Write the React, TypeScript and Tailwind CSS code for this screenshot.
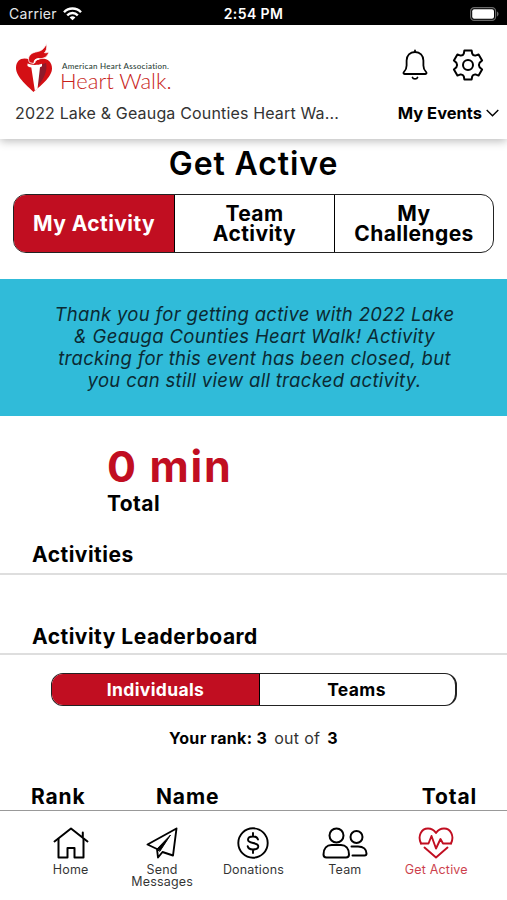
import type { ReactNode } from 'react';
import clsx from 'clsx';

const tabs = [
  { id: 'my', lines: ['My Activity'], className: 'w-[160px]' },
  { id: 'team', lines: ['Team', 'Activity'], className: 'w-[160px] border-l border-black' },
  { id: 'challenges', lines: ['My', 'Challenges'], className: 'flex-1 border-l border-black' },
];

const bannerLines = [
  'Thank you for getting active with 2022 Lake',
  '& Geauga Counties Heart Walk! Activity',
  'tracking for this event has been closed, but',
  'you can still view all tracked activity.',
];

function StatusBar() {
  return (
    <div className="flex h-[25px] items-center bg-black px-[9px] pt-[2px] text-white">
      <div className="flex flex-1 items-center gap-[6px]">
        <span className="text-[14px] leading-5 tracking-[0.02em] text-gray-200">Carrier</span>
        <svg width="19" height="14" viewBox="0 0 19 14" fill="none" stroke="white" strokeWidth="2.4">
          <path d="M1 5.2C5.6.3 13.4.3 18 5.2" />
          <path d="M4.2 8.3c3-3 7.6-3 10.6 0" />
          <path d="M9.5 13.3 6.6 10.4c1.7-1.5 4.1-1.5 5.8 0z" fill="white" stroke="none" />
        </svg>
      </div>
      <span className="text-[14px] font-semibold leading-5 tracking-[0.03em]">2:54 PM</span>
      <div className="flex flex-1 justify-end">
        <svg width="29" height="14" viewBox="0 0 29 14" className="-mr-[1px]">
          <rect x="0.6" y="0.6" width="25" height="12.8" rx="3.6" fill="none" stroke="#6b6b6b" strokeWidth="1.2" />
          <rect x="2.2" y="2.2" width="21.8" height="9.6" rx="2" fill="white" />
          <path d="M27 4.6v4.8c2-.8 2-4 0-4.8z" fill="#6b6b6b" />
        </svg>
      </div>
    </div>
  );
}

function HeartTorchLogo() {
  return (
    <svg width="38" height="50" viewBox="0 0 38 50">
      <path
        d="M18.5 49C14 44 1 34.5 1 25 1 18.5 5 15.5 9.5 15.5c4 0 7 2 9 5 2-3 5-5 9-5 5 0 9.5 3.5 9.5 10 0 9-13 18.5-18.5 23.5z"
        fill="#d40f14"
      />
      <path d="M24 22.5 31 20c2 7-2 17-11.5 27z" fill="#8f1a2a" />
      <path
        d="M14.5 19.5C12 15 14.500 11 19 9.500c4-1.400 9-.5 12.500-9 .8 5-.2 7.500-2 9.200 1.500.2 3 0 4.300-1-.8 5-4.800 7-9.300 7-2.500 0-5.500.8-5.500 5z"
        fill="#d40f14"
        stroke="white"
        strokeWidth="0.8"
      />
      <path d="M19.5 20c-.3-3.200 2-4 5-4.300" stroke="white" strokeWidth="1.5" fill="none" />
      <path d="M12.5 20.500c4 1.800 10 1.800 14.500.2v2.500c-.6.500-1.300.8-2 1L22.500 46l-2.700 1.500L16.300 24.500c-1.800-.3-2.800-.8-3.800-1.500z" fill="white" />
    </svg>
  );
}

function BellIcon() {
  return (
    <svg width="28" height="32" viewBox="0 0 28 32" fill="none" stroke="black" strokeWidth="1.8" strokeLinecap="round" strokeLinejoin="round">
      <path d="M14 1.500V3M14 3C9 3 5.600 6.600 5.600 11.500v5c0 3-.8 4.600-2.600 6.300-1 1-.6 2.200.6 2.200h20.800c1.200 0 1.600-1.200.6-2.200-1.800-1.700-2.600-3.300-2.600-6.300v-5C22.400 6.600 19 3 14 3z" />
      <path d="M11.500 28.500c.7 1.900 4.300 1.900 5 0" />
    </svg>
  );
}

function GearIcon() {
  return (
    <svg width="32" height="32" viewBox="0 0 32 32" fill="none" stroke="black" strokeWidth="2" strokeLinejoin="round">
      <circle cx="16" cy="16" r="5" />
      <path d="M12.400 1.400h7.200l.6 3.200q.8 2.200 3.200 2l3.200-1.200 3.500 6.200-2.500 2.200q-1.400 2.200 0 4.400l2.500 2.200-3.500 6.200-3.200-1.200q-2.400-.2-3.200 2l-.6 3.200h-7.200l-.6-3.200q-.8-2.200-3.200-2l-3.200 1.200-3.500-6.200 2.500-2.200q1.400-2.200 0-4.400l-2.500-2.200 3.500-6.200 3.200 1.200q2.400.2 3.200-2z" />
    </svg>
  );
}

function Header() {
  return (
    <header className="relative h-[114px] bg-white pl-[15px] pr-2 shadow-[0_2px_9px_rgba(0,0,0,0.28)]">
      <div className="flex h-[76px] items-start">
        <div className="mt-[18px]">
          <HeartTorchLogo />
        </div>
        <div className="ml-[9px] mt-[36px] whitespace-nowrap font-['Lato']">
          <div className="text-[8px] font-medium leading-[10px] tracking-[0.035em] text-[#2c4238]">American Heart Association.</div>
          <div className="-ml-[2px] -mt-px text-[22px] font-light leading-[22px] text-[#c81e1a]">Heart Walk.</div>
        </div>
        <div className="ml-auto mr-[15px] mt-[24px] flex gap-[23px]">
          <BellIcon />
          <GearIcon />
        </div>
      </div>
      <div className="flex h-[24px] items-center justify-between whitespace-nowrap">
        <span className="text-[16px] leading-[24px] tracking-[0.01em] text-[#333]">2022 Lake &amp; Geauga Counties Heart Wa...</span>
        <div className="flex items-center gap-[4px]">
          <span className="text-[16.5px] font-bold leading-[24px]">My Events</span>
          <svg width="13" height="8" viewBox="0 0 13 8" fill="none" stroke="black" strokeWidth="1.4">
            <path d="m.7 1 5.800 5.800L12.300 1" />
          </svg>
        </div>
      </div>
    </header>
  );
}

function SectionTitle({ children, className }: { children: ReactNode; className?: string }) {
  return (
    <h2 className={clsx('border-b-2 border-[#dedede] pl-[32px] text-[21px] font-bold leading-[24px] tracking-[0.023em]', className)}>
      {children}
    </h2>
  );
}

function HomeIcon() {
  return (
    <svg width="36" height="32" viewBox="0 0 36 32" fill="none" stroke="currentColor" strokeWidth="2" strokeLinecap="round" strokeLinejoin="round">
      <path d="M1.500 14.500 18 1.500l16.500 13M29.800 10V5.500" />
      <path d="M5.500 12v18.500h9V21h7v9.500h9V12" />
    </svg>
  );
}

function SendIcon() {
  return (
    <svg width="32" height="32" viewBox="0 0 32 32" fill="none" stroke="currentColor" strokeWidth="1.9" strokeLinecap="round" strokeLinejoin="round">
      <path d="M30.500 1.500 1.500 17.500l9.500 4.500 1 8.500 4.500-5.500 10.500 3.500z" />
      <path d="M11 22 24.500 8 14 24z" fill="currentColor" strokeWidth="1" />
    </svg>
  );
}

function DonateIcon() {
  return (
    <svg width="32" height="32" viewBox="0 0 32 32" fill="none" stroke="currentColor" strokeWidth="1.9" strokeLinecap="round">
      <circle cx="16" cy="16" r="14.7" />
      <path d="M16 6v3.500M16 22.500V26M21 12.500c-.6-1.900-2.400-3-5-3-2.900 0-5 1.300-5 3.300 0 4.700 10.300 1.700 10.300 6.500 0 2-2.300 3.200-5.300 3.200-2.900 0-4.900-1.200-5.300-3.200" />
    </svg>
  );
}

function TeamIcon() {
  return (
    <svg width="46" height="32" viewBox="0 0 46 32" fill="none" stroke="currentColor" strokeWidth="2" strokeLinecap="round" strokeLinejoin="round">
      <circle cx="14.5" cy="8.5" r="7" />
      <path d="M4.500 30.500c-2 0-3-1-3-3 0-6.500 3.500-9.500 8-9.500h9.500c4.500 0 8 3 8 9.500 0 2-1 3-3 3z" />
      <circle cx="34.5" cy="10" r="6" />
      <path d="M29.500 19.500H36c5.500 0 8.500 3 8.500 7 0 1.400-.7 2-2 2H30.500" />
    </svg>
  );
}

function ActiveIcon() {
  return (
    <svg width="36" height="32" viewBox="0 0 36 32" fill="none" stroke="currentColor" strokeWidth="1.9" strokeLinecap="round" strokeLinejoin="round">
      <path d="M3 16.500C-.5 9.500 3 1.500 10 1.500c3.500 0 6 1.500 8 4.500 2-3 4.500-4.500 8-4.500 7 0 10.500 8 7 15" />
      <path d="M3 16.500h7.500l3-7.500 4.500 12.500 4.500-9.500 2.500 4.500h8M6.500 20.500 18 30.500l11.500-10" />
    </svg>
  );
}

const navItems = [
  { label: ['Home'], icon: <HomeIcon /> },
  { label: ['Send', 'Messages'], icon: <SendIcon /> },
  { label: ['Donations'], icon: <DonateIcon /> },
  { label: ['Team'], icon: <TeamIcon /> },
  { label: ['Get Active'], icon: <ActiveIcon />, active: true },
];

export default function App() {
  return (
    <div className="flex h-[900px] w-[507px] flex-col overflow-hidden bg-white font-['Inter',sans-serif] text-black">
      <StatusBar />
      <Header />

      <main className="h-[671px]">
        <h1 className="pt-[5px] text-center text-[32px] font-semibold leading-[40px] tracking-[0.028em]">Get Active</h1>

        <div className="ml-[13px] mt-[10px] flex h-[59px] w-[481px] overflow-hidden rounded-[13px] border border-[#222]">
          {tabs.map(tab => (
            <button
              key={tab.id}
              className={clsx(
                'flex flex-col items-center justify-center pt-px text-[21px] font-bold leading-[20.5px] tracking-[0.02em]',
                tab.className,
                tab.id === 'my' && 'bg-[#c10e21] text-white'
              )}
            >
              {tab.lines.map(line => <span key={line}>{line}</span>)}
            </button>
          ))}
        </div>

        <div className="mt-[26px] h-[137px] bg-[#30bbd9] pl-[2px] pt-[24px] text-center text-[18.5px] italic leading-[22px] tracking-[0.017em] text-[#0b2a33]">
          {bannerLines.map(line => <p key={line}>{line}</p>)}
        </div>

        <div className="h-[126px] pl-[107px] pt-[28px]">
          <div className="text-[43px] font-bold leading-[44px] tracking-[0.04em] text-[#c10e21]">0 min</div>
          <div className="pt-[4px] text-[21px] font-bold leading-[24px] tracking-[0.02em]">Total</div>
        </div>

        <SectionTitle className="h-[33px] pt-px">Activities</SectionTitle>
        <SectionTitle className="h-[80px] pt-[50px]">Activity Leaderboard</SectionTitle>

        <div className="ml-[51px] mt-[18px] flex h-[33px] w-[406px] overflow-hidden rounded-[12px] border border-r-2 border-[#222] text-[17.5px] font-bold tracking-[0.02em]">
          <button className="w-[208px] border-r border-black bg-[#c10e21] pt-px text-white">Individuals</button>
          <button className="flex-1 pr-[2px] pt-px">Teams</button>
        </div>

        <p className="mt-[20px] text-center text-[16px] leading-[24px] tracking-[0.02em] text-[#333]">
          <b className="text-black">Your rank: 3</b>
          <span className="px-[7px]">out of</span>
          <b className="text-black">3</b>
        </p>

        <div className="mt-[35px] flex pl-[31px] pr-[30px] text-[21px] font-bold leading-[24px] tracking-[0.04em]">
          <span className="w-[125px]">Rank</span>
          <span className="flex-1">Name</span>
          <span>Total</span>
        </div>
      </main>

      <nav className="flex h-[90px] justify-center border-t-[1.5px] border-[#999] bg-white pt-4">
        {navItems.map(item => (
          <a
            key={item.label[0]}
            className={clsx(
              'flex w-[91.4px] flex-col items-center text-[12.5px] leading-[12px] tracking-[0.015em]',
              item.active ? 'text-[#c10e21]' : 'text-black'
            )}
          >
            {item.icon}
            <span className="flex flex-col items-center pt-[5px] opacity-80">
              {item.label.map(line => <span key={line}>{line}</span>)}
            </span>
          </a>
        ))}
      </nav>
    </div>
  );
}
